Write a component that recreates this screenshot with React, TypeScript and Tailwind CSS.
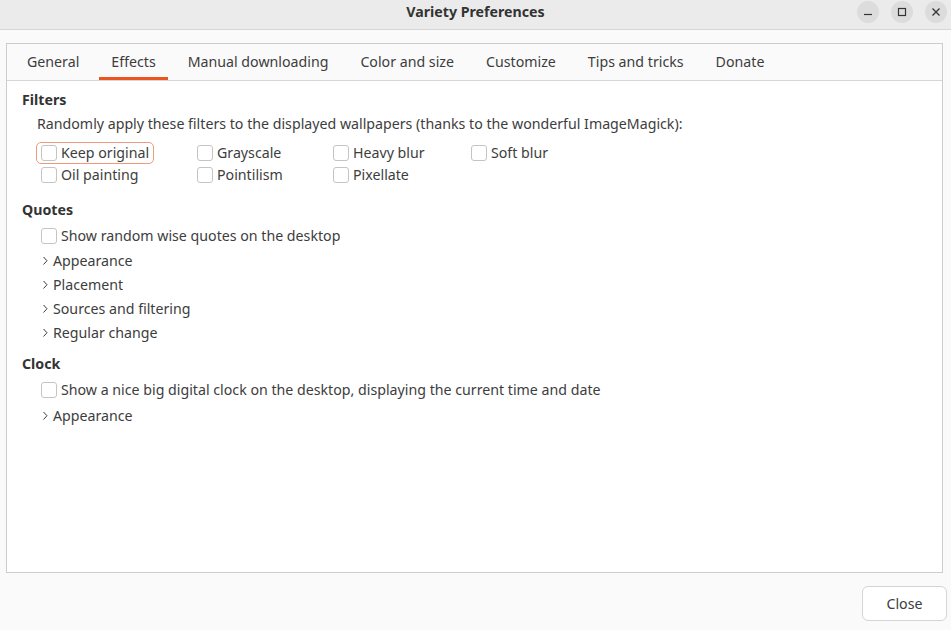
import React from 'react';

const tabs = ['General', 'Effects', 'Manual downloading', 'Color and size', 'Customize', 'Tips and tricks', 'Donate'];

const Check = () => (
  <span className="w-[16px] h-[16px] rounded-[3px] border border-[#c4c4c4] bg-white shrink-0" />
);

const Chevron = () => (
  <svg width="8" height="12" viewBox="0 0 8 12" className="shrink-0">
    <path d="M2.5 2 L6 5.75 L2.5 9.5" fill="none" stroke="#3d3d3d" strokeWidth="1" />
  </svg>
);

const CheckRow = ({ label, focus = false }: { label: string; focus?: boolean }) => (
  <div className="h-[22px] flex items-center">
    <div
      className={`flex items-center gap-[4px] h-[22px] pl-[4px] pr-[4px] -ml-[5px] rounded-[5px] border ${
        focus ? 'border-[#ed9b7c]' : 'border-transparent'
      }`}
    >
      <Check />
      <span>{label}</span>
    </div>
  </div>
);

const Expander = ({ label }: { label: string }) => (
  <div className="h-[24px] flex items-center gap-[4px] pl-[34px]">
    <Chevron />
    <span>{label}</span>
  </div>
);

const App: React.FC = () => {
  return (
    <div
      className="w-[951px] h-[630px] flex flex-col bg-[#fafafa] text-[#3d3d3d] text-[14.2px] overflow-hidden"
      style={{ fontFamily: '"Noto Sans", "Open Sans", sans-serif' }}
    >
      {/* Title bar */}
      <div className="h-[30px] shrink-0 bg-[#ebebeb] border-b border-[#d6d6d6] relative flex items-center justify-center pb-[6px]">
        <span className="font-bold text-[14.2px] text-[#333]">Variety Preferences</span>
        <div className="absolute right-[4px] top-[1px] flex gap-[12px]">
          <button className="w-[22px] h-[22px] rounded-full bg-[#dcdcdc] flex items-center justify-center">
            <svg width="10" height="10" viewBox="0 0 10 10"><path d="M1 7.5 H9" stroke="#333" strokeWidth="1.2" /></svg>
          </button>
          <button className="w-[22px] h-[22px] rounded-full bg-[#dcdcdc] flex items-center justify-center">
            <svg width="10" height="10" viewBox="0 0 10 10"><rect x="1.5" y="1.5" width="7" height="7" fill="none" stroke="#333" strokeWidth="1.2" /></svg>
          </button>
          <button className="w-[22px] h-[22px] rounded-full bg-[#dcdcdc] flex items-center justify-center">
            <svg width="10" height="10" viewBox="0 0 10 10"><path d="M1.5 1.5 L8.5 8.5 M8.5 1.5 L1.5 8.5" stroke="#333" strokeWidth="1.3" /></svg>
          </button>
        </div>
      </div>

      {/* Notebook */}
      <div className="mt-[13px] ml-[6px] mr-[8px] h-[530px] border border-[#cdcdcd] bg-white flex flex-col">
        <div className="h-[37px] shrink-0 border-b border-[#d6d6d6] flex items-stretch gap-[8px] pl-[8px] bg-[#fafafa]">
          {tabs.map(t => (
            <div
              key={t}
              className={`px-[12px] flex items-center pt-[3px] border-b-[3px] ${
                t === 'Effects' ? 'border-[#e95420]' : 'border-transparent'
              }`}
            >
              {t}
            </div>
          ))}
        </div>

        <div className="flex flex-col pl-[15px] pt-[9px] bg-white">
          <div className="h-[20px] flex items-center font-bold text-[#333]">Filters</div>
          <div className="h-[20px] flex items-center mt-[4px] pl-[15px]">
            Randomly apply these filters to the displayed wallpapers (thanks to the wonderful ImageMagick):
          </div>
          <div className="mt-[8px] pl-[19px] grid grid-cols-[156px_136px_138px_auto]">
            <CheckRow label="Keep original" focus />
            <CheckRow label="Grayscale" />
            <CheckRow label="Heavy blur" />
            <CheckRow label="Soft blur" />
            <CheckRow label="Oil painting" />
            <CheckRow label="Pointilism" />
            <CheckRow label="Pixellate" />
          </div>

          <div className="h-[20px] mt-[14px] flex items-center font-bold text-[#333]">Quotes</div>
          <div className="mt-[5px] pl-[19px]">
            <CheckRow label="Show random wise quotes on the desktop" />
          </div>
          <div className="-ml-[15px] mt-[2px]">
            <Expander label="Appearance" />
            <Expander label="Placement" />
            <Expander label="Sources and filtering" />
            <Expander label="Regular change" />
          </div>

          <div className="h-[20px] mt-[9px] flex items-center font-bold text-[#333]">Clock</div>
          <div className="mt-[5px] pl-[19px]">
            <CheckRow label="Show a nice big digital clock on the desktop, displaying the current time and date" />
          </div>
          <div className="-ml-[15px] mt-[3px]">
            <Expander label="Appearance" />
          </div>
        </div>
      </div>

      {/* Footer */}
      <div className="flex justify-end pr-[4px] pt-[13px]">
        <button className="w-[85px] h-[35px] rounded-[6px] border border-[#d4d4d4] bg-white text-[#3d3d3d]">
          Close
        </button>
      </div>
    </div>
  );
};

export default App;
